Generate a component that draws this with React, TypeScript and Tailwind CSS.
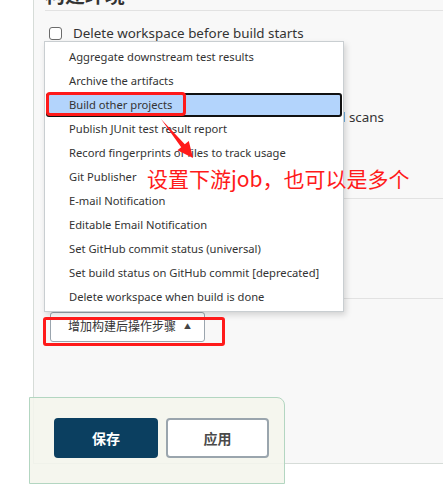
const menuItems = [
  'Aggregate downstream test results',
  'Archive the artifacts',
  'Build other projects',
  'Publish JUnit test result report',
  'Record fingerprints of files to track usage',
  'Git Publisher',
  'E-mail Notification',
  'Editable Email Notification',
  'Set GitHub commit status (universal)',
  'Set build status on GitHub commit [deprecated]',
  'Delete workspace when build is done',
]

const font = "font-['Noto_Sans','Noto_Sans_CJK_SC',sans-serif]"

function Checkbox() {
  return <span className="block h-[13px] w-[13px] shrink-0 rounded-[3px] border border-[#6b6b6b] bg-white" />
}

export default function App() {
  return (
    <div className={`relative h-[495px] w-[443px] overflow-hidden bg-white ${font}`}>
      {/* config panel */}
      <div className="ml-[33px] h-[480px] border-b border-l border-[#d6dcd8] bg-[#f8f8f8] pl-[11px]">
        <div className="-mt-[16px] border-b border-[#e2e2e2] pb-[2px] text-[20px] leading-[24px] font-bold text-[#333]">
          构建环境
        </div>
        <div className="flex flex-col gap-[14px] pt-[15px] pl-[4px] text-[13.4px] leading-[14px] text-[#333]">
          <label className="flex items-center gap-[11px]">
            <Checkbox />
            <span>Delete workspace before build starts</span>
          </label>
          <label className="flex items-center gap-[11px]">
            <Checkbox />
            <span>Use secret text(s) or file(s)</span>
          </label>
          <label className="flex items-center gap-[11px]">
            <Checkbox />
            <span>Add timestamps to the Console Output</span>
          </label>
          <label className="flex items-center gap-[11px]">
            <Checkbox />
            <span className="whitespace-nowrap">Inspect build log for published Gradle build scans</span>
          </label>
        </div>
        <div className="mt-[74px] border-t border-[#e2e2e2]" />
        <div className="mt-[99px] border-t border-[#e2e2e2]" />
        <div className="mt-[13px] pl-[5px]">
          <button className="flex h-[30px] w-[155px] items-center rounded-[3px] border-[1.5px] border-[#9ba5ae] bg-white pl-[17px] text-[12px] text-[#333]">
            增加构建后操作步骤
            <span className="ml-[8px] text-[7px] text-[#444]">▲</span>
          </button>
        </div>
      </div>

      {/* dropdown menu */}
      <div className="absolute top-[41px] left-[44px] w-[300px] border border-[#c9ced1] bg-white pt-[3px] pb-[2px] shadow-[2px_3px_6px_rgba(0,0,0,0.15)]">
        {menuItems.map((item, i) =>
          i === 2 ? (
            <div
              key={item}
              className="mx-[1px] h-[24px] rounded-[3px] border-2 border-[#111] bg-[#b3d4fc] pl-[21px] text-[11.2px] leading-[20px] whitespace-nowrap text-[#333]"
            >
              {item}
            </div>
          ) : (
            <div key={item} className="h-[24px] pl-[24px] text-[11.2px] leading-[24px] whitespace-nowrap text-[#333]">
              {item}
            </div>
          )
        )}
      </div>

      {/* annotations */}
      <div className="absolute top-[92px] left-[46px] h-[24px] w-[140px] rounded-[4px] border-[3px] border-[#ff1a1a]" />
      <div className="absolute top-[317px] left-[43px] h-[29px] w-[182px] rounded-[3px] border-[3px] border-[#ff1a1a]" />
      <svg className="absolute top-0 left-0" width="443" height="495">
        <polygon points="161,119 184.8,144.2 188.8,141 193,158 177.4,150.3 181.2,147.2" fill="#ff1a1a" />
      </svg>
      <div className="absolute top-[164px] left-[147px] font-['Noto_Sans_CJK_SC',sans-serif] text-[21px] leading-[28px] whitespace-nowrap text-[#ff1a1a]">
        设置下游job，也可以是多个
      </div>

      {/* sticky save bar */}
      <div className="absolute top-[397px] left-[29px] flex h-[87px] w-[256px] gap-[8px] rounded-tr-[8px] border border-[#b3d6c1] bg-[rgba(244,245,236,0.88)] pt-[20px] pl-[24px]">
        <button className="h-[40px] w-[104px] rounded-[4px] bg-[#0b3f60] text-[14px] font-bold text-white">保存</button>
        <button className="h-[40px] w-[103px] rounded-[4px] border-2 border-[#9aa5ad] bg-white text-[14px] font-bold text-[#4a4a4a]">
          应用
        </button>
      </div>
    </div>
  )
}
